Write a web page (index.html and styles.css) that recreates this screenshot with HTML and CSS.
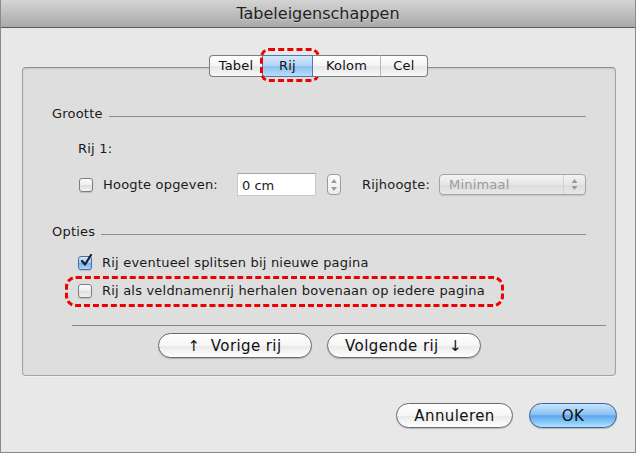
FILE: index.html
```html
<!DOCTYPE html>
<html lang="nl">
<head>
  <meta charset="UTF-8">
  <title>Tabeleigenschappen</title>
  <link rel="stylesheet" href="styles.css">
</head>
<body>
  <div class="window">
    <div class="titlebar">Tabeleigenschappen</div>

    <div class="tabs">
      <span class="tab first">Tabel</span>
      <span class="tab active">Rij<span class="mark mark-tab"></span></span>
      <span class="tab mid">Kolom</span>
      <span class="tab last">Cel</span>
    </div>

    <div class="panel">
      <div class="section-head"><span>Grootte</span><i class="rule"></i></div>
      <div class="row-label">Rij 1:</div>
      <div class="size-row">
        <label class="check size-check"><span class="box"></span><span class="check-text">Hoogte opgeven:</span></label>
        <span class="field">0 cm</span>
        <span class="stepper">
          <svg width="6" height="16" viewBox="0 0 6 16"><path d="M0 6 L3 2 L6 6 Z M0 10 L3 14 L6 10 Z" fill="#9a9a9a"/></svg>
        </span>
        <span class="popup-label">Rijhoogte:</span>
        <span class="popup">
          <span class="popup-text">Minimaal</span>
          <span class="popup-arrows">
            <svg width="7" height="13" viewBox="0 0 7 13"><path d="M0.5 5 L3.5 1 L6.5 5 Z M0.5 8 L3.5 12 L6.5 8 Z" fill="#9a9a9a"/></svg>
          </span>
        </span>
      </div>

      <div class="section-head"><span>Opties</span><i class="rule"></i></div>
      <div class="options">
        <label class="check">
          <span class="box checked">
            <svg width="14" height="14" viewBox="0 0 14 14"><path d="M3 7 L6 10.5 L12 1" fill="none" stroke="#1c1c2c" stroke-width="2.2" stroke-linecap="round" stroke-linejoin="round"/></svg>
          </span>
          <span class="check-text">Rij eventueel splitsen bij nieuwe pagina</span>
        </label>
        <label class="check marked">
          <span class="box"></span>
          <span class="check-text">Rij als veldnamenrij herhalen bovenaan op iedere pagina</span>
          <span class="mark mark-row"></span>
        </label>
      </div>

      <div class="sep"></div>

      <div class="nav">
        <button class="pill">&#8593;&nbsp; Vorige rij</button>
        <button class="pill">Volgende rij &nbsp;&#8595;</button>
      </div>
    </div>

    <div class="actions">
      <button class="pill cancel">Annuleren</button>
      <button class="pill default">OK</button>
    </div>
  </div>
</body>
</html>
```

FILE: styles.css
```css
html, body { margin: 0; background: #fff; }
body {
  font-family: 'DejaVu Sans', 'Noto Sans', sans-serif; font-size: 13px;
  letter-spacing: 0.2px; color: #1a1a1a;
}

/* venster */
.window {
  width: 634px; height: 452px;
  background: #e8e8e8;
  border: 1px solid #8a8a8a; border-top: none;
  position: relative;
}
.titlebar {
  height: 27px; line-height: 28px;
  text-align: center; font-size: 16px; letter-spacing: 0; color: #222;
  background: linear-gradient(#d4d4d4, #a9a9a9);
  border-bottom: 1px solid #5a5a5a;
  text-shadow: 0 1px 0 rgba(255,255,255,0.35);
}

/* tabbladen */
.tabs {
  display: flex; margin: 27px 0 0 208px; position: relative; z-index: 2;
}
.tab {
  position: relative; box-sizing: border-box;
  height: 22px; line-height: 20px; text-align: center;
  background: linear-gradient(#ffffff, #f4f4f4 50%, #e6e6e6 51%, #f7f7f7);
  border: 1px solid #7d7d7d; border-left: none; border-right: 1px solid #b5b5b5;
  color: #111;
}
.tab.first { width: 54px; border-left: 1px solid #7d7d7d; border-radius: 4px 0 0 4px; }
.tab.active {
  width: 51px; margin-left: -1px;
  background: linear-gradient(#d5e8fb, #b3d4f6 50%, #8cc0f1 51%, #b8dcfb);
  border: 1px solid #5577a8;
}
.tab.mid { width: 68px; }
.tab.last { width: 47px; border-right: 1px solid #7d7d7d; border-radius: 0 4px 4px 0; }

/* markering */
.mark { position: absolute; border: 3px dashed #ee0000; pointer-events: none; }
.mark-tab { top: -8px; bottom: -6px; left: -3px; right: -8px; border-radius: 9px; }
.mark-row { top: -7px; bottom: -8px; left: -13px; right: -19px; border-radius: 11px; }

/* paneel */
.panel {
  margin: -10px 0 0 21px; width: 534px; height: 269px;
  padding: 38px 29px 0 29px;
  background: #dedede;
  border: 1px solid #a4a4a4; border-top-color: #8e8e8e; border-radius: 4px;
  box-shadow: inset 0 1px 2px rgba(0,0,0,0.12), 0 1px 0 #f2f2f2;
  position: relative;
}
.section-head { display: flex; align-items: center; height: 16px; line-height: 16px; }
.rule { flex: 1; border-top: 1px solid #8c8c8c; margin: 5px 0 0 6px; }
.row-label { margin: 19px 0 0 26px; line-height: 16px; }

.size-row { display: flex; align-items: center; height: 25px; margin: 15px 0 27px 0; }
.check { display: inline-flex; align-items: center; position: relative; line-height: 16px; }
.box {
  width: 12px; height: 12px; margin-right: 10px; position: relative; flex: none;
  border: 1px solid #7e7e7e; border-radius: 3px;
  background: linear-gradient(#fbfbfb, #eeeeee 50%, #dedede 51%, #f2f2f2);
  box-shadow: 0 1px 1px rgba(0,0,0,0.15);
}
.box.checked {
  background: linear-gradient(#d4e8fc, #9ccaf4 50%, #74b2ee 51%, #acd6fb);
  border-color: #4c6c9c;
}
.box svg { position: absolute; left: 0; top: -3px; }
.size-check { margin-left: 27px; width: 158px; }
.field {
  width: 73px; height: 21px; line-height: 23px; padding-left: 4px;
  background: #fff; border: 1px solid #c9c9c9; border-top-color: #a6a6a6;
  letter-spacing: 0;
}
.stepper {
  width: 12px; height: 19px; margin-left: 11px;
  display: inline-flex; align-items: center; justify-content: center;
  border: 1px solid #9b9b9b; border-radius: 4px;
  background: linear-gradient(#fbfbfb, #ececec);
}
.popup-label { margin-left: 21px; width: 77px; }
.popup {
  width: 145px; height: 19px; display: flex; align-items: center;
  border: 1px solid #a5a5a5; border-radius: 4px;
  background: linear-gradient(#f3f3f3, #e6e6e6 50%, #dcdcdc 51%, #e8e8e8);
  box-shadow: 0 1px 1px rgba(0,0,0,0.12);
}
.popup-text { flex: 1; padding-left: 9px; color: #9a9a9a; }
.popup-arrows {
  width: 21px; height: 19px; display: flex; align-items: center; justify-content: center;
  border-left: 1px solid #d2d2d2;
}

.options { margin: 15px 0 0 26px; display: flex; flex-direction: column; align-items: flex-start; gap: 12px; }

.sep { margin: 26px -20px 0 20px; border-top: 1px solid #8a8a8a; }

.nav { display: flex; justify-content: center; gap: 15px; margin: 7px 0 0 0; }
.pill {
  height: 25px; padding: 0;
  font-family: inherit; font-size: 15px; letter-spacing: 0.4px; color: #111;
  border: 1px solid #6a6a6a; border-radius: 13px;
  background: linear-gradient(#ffffff, #f6f6f6 50%, #e9e9e9 51%, #ffffff);
  box-shadow: 0 1px 1px rgba(0,0,0,0.2);
}
.nav .pill { width: 154px; }

.actions { display: flex; justify-content: flex-end; gap: 16px; margin: 27px 18px 0 0; }
.cancel { width: 117px; }
.default {
  width: 88px;
  border-color: #3e5f98;
  background: linear-gradient(#c9e3fb, #8cc3f3 45%, #5ea6ec 52%, #8fd0fc 85%, #b8e4ff);
}
```
